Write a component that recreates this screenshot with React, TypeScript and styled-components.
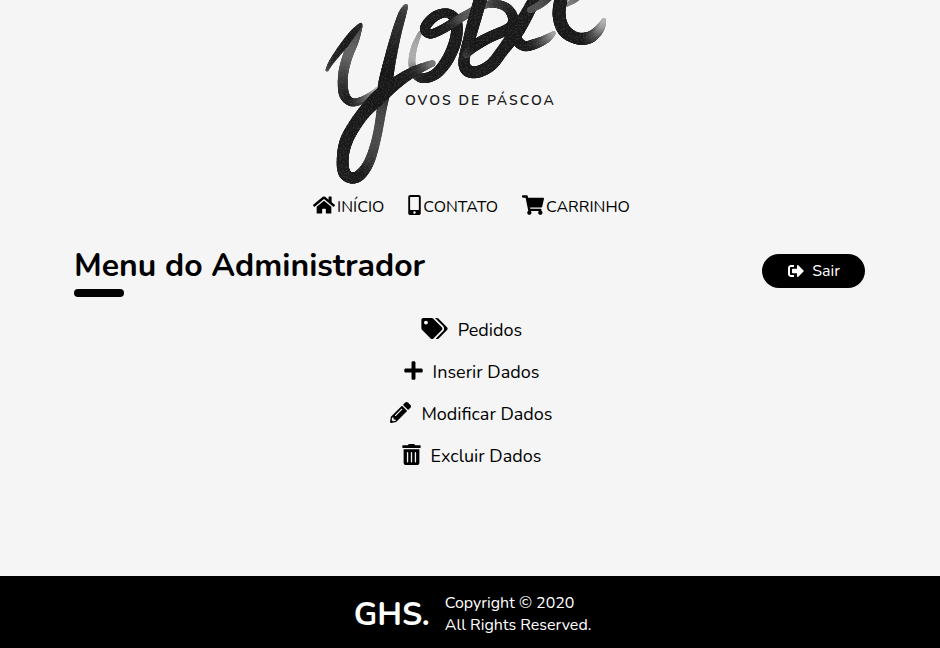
import React from "react";
import styled, { createGlobalStyle } from "styled-components";
import {
  FaHome,
  FaMobileAlt,
  FaPencilAlt,
  FaPlus,
  FaShoppingCart,
  FaSignOutAlt,
  FaTags,
  FaTrashAlt,
} from "react-icons/fa";

const GlobalStyle = createGlobalStyle`
  * { box-sizing: border-box; }
  body {
    margin: 0;
    background: #f5f5f5;
    color: #000;
    font-family: Nunito, Lato, "Noto Sans", sans-serif;
    font-size: 16px;
  }
`;

const Page = styled.div`
  display: flex;
  flex-direction: column;
  min-height: 100vh;
`;

const Header = styled.header`
  display: flex;
  flex-direction: column;
  align-items: center;
`;

const LogoLink = styled.a`
  display: block;
  color: #1a1a1a;
`;

const LogoSvg = styled.svg`
  display: block;
  width: 300px;
  height: 191px;
`;

const LogoCaption = styled.text`
  font-family: Nunito, Lato, sans-serif;
  font-size: 14px;
  font-weight: 600;
  letter-spacing: 2px;
  fill: #1a1a1a;
`;

const Nav = styled.nav`
  display: flex;
  justify-content: center;
  gap: 24px;
  height: 32px;
  padding-left: 3px;
`;

const NavLink = styled.a<{ $iconWidth: number }>`
  display: flex;
  align-items: center;
  gap: 2px;
  color: inherit;
  text-decoration: none;
  line-height: 32px;

  svg {
    flex: none;
    width: ${(p) => p.$iconWidth}px;
    height: 20px;
    margin-bottom: 4px;
  }
`;

const Main = styled.main`
  flex: 1;
  padding: 0 75px 0 74px;
`;

const TitleRow = styled.div`
  display: flex;
  justify-content: space-between;
  align-items: flex-start;
  padding-top: 21px;
`;

const Title = styled.h1`
  margin: 0;
  font-size: 32px;
  font-weight: 700;
  line-height: 44px;

  &::after {
    content: "";
    display: block;
    width: 50px;
    height: 8px;
    margin-top: 1px;
    border-radius: 4px;
    background: #000;
  }
`;

const LogoutButton = styled.button`
  display: flex;
  align-items: center;
  gap: 8px;
  height: 34px;
  margin-top: 10px;
  padding: 0 25px 0 26px;
  border: 0;
  border-radius: 17px;
  background: #000;
  color: #fff;
  font: inherit;
  cursor: pointer;
`;

const MenuList = styled.ul`
  display: flex;
  flex-direction: column;
  align-items: center;
  margin: 0;
  padding: 12px 0 0 4px;
  list-style: none;
`;

const MenuLink = styled.a<{ $iconWidth: number }>`
  display: flex;
  align-items: center;
  gap: 10px;
  height: 42px;
  color: inherit;
  font-size: 18px;
  text-decoration: none;

  svg {
    flex: none;
    width: ${(p) => p.$iconWidth}px;
    height: 21px;
    margin-bottom: 3px;
  }
`;

const Footer = styled.footer`
  display: flex;
  justify-content: center;
  align-items: center;
  gap: 15px;
  height: 72px;
  padding: 4px 0 0 5px;
  background: #000;
  color: #fff;
`;

const Brand = styled.strong`
  font-size: 32px;
  font-weight: 700;
`;

const Copyright = styled.p`
  margin: 0;
  line-height: 22px;
`;

/* x, y, brush width, grey level */
type Point = [number, number, number, number];

const strokes: Point[][] = [
  [
    [420, 33, 4, 150], [414, 48, 6, 170], [412, 64, 7, 165], [417, 76, 8, 60],
    [426, 78, 10, 32], [438, 72, 11, 28], [449, 57, 12, 26], [456, 38, 12, 26],
    [456, 21, 11, 26], [447, 13, 9, 26], [434, 17, 10, 28], [425, 28, 10, 26],
    [430, 34, 9, 26], [441, 30, 9, 26], [453, 23, 9, 40], [464, 16, 8, 80],
    [482, 6, 7, 100], [496, 4, 8, 60], [507, 8, 9, 45], [513, 18, 10, 30],
    [510, 31, 9, 26],
  ],
  [
    [482, -6, 13, 26], [475, 18, 13, 26], [469, 40, 12, 26], [464, 60, 11, 30],
    [467, 70, 12, 26], [477, 72, 12, 26], [491, 65, 12, 28], [503, 50, 12, 26],
    [517, 31, 14, 26], [528, 12, 13, 26], [537, -5, 12, 26],
  ],
  [[466, 55, 6, 60], [476, 45, 11, 26], [490, 37, 11, 26], [508, 29, 11, 26], [519, 20, 11, 26]],
  [
    [530, 10, 6, 80], [541, 4, 7, 80], [551, -5, 8, 60],
  ],
  [
    [516, 24, 12, 26], [516, 38, 11, 26], [524, 46, 10, 26], [535, 44, 10, 35],
    [546, 39, 8, 90], [554, 33, 4, 165],
  ],
  [[565, 6, 3, 130], [574, 0, 6, 120], [581, -6, 6, 90]],
  [
    [562, -6, 13, 26], [559, 14, 13, 26], [564, 30, 13, 26], [576, 38, 12, 26],
    [588, 38, 12, 32], [597, 32, 10, 85], [602, 25, 7, 150], [604, 20, 4, 180],
  ],
  [
    [360, 26, 5, 60], [354, 40, 10, 85], [347, 58, 10, 100], [343, 76, 10, 70],
    [344, 94, 10, 40], [351, 102, 8, 32], [360, 101, 7, 60], [370, 95, 5, 120],
    [377, 88, 2, 180],
  ],
  [[327, 70, 3, 80], [332, 61, 5, 45], [344, 45, 7, 28], [354, 32, 6, 28], [361, 24, 3, 40]],
  [
    [406, 6, 4, 100], [402, 15, 8, 55], [396, 35, 10, 42], [390, 60, 12, 28],
    [385, 85, 14, 24], [382, 107, 10, 60], [377, 136, 9, 75], [370, 160, 10, 60],
    [361, 174, 11, 34], [352, 178, 11, 26], [344, 172, 12, 30], [343, 155, 12, 28],
    [348, 137, 13, 26], [362, 115, 13, 26], [378, 98, 15, 24], [392, 86, 13, 24],
    [406, 76, 11, 28], [419, 69, 9, 45], [433, 63, 6, 120],
  ],
];

const spline = (a: number, b: number, c: number, d: number, t: number) =>
  0.5 *
  (2 * b + (c - a) * t + (2 * a - 5 * b + 4 * c - d) * t * t + (3 * b - a - 3 * c + d) * t * t * t);

const STEPS = 18;

function BrushStroke({ points }: { points: Point[] }) {
  const samples: number[][] = [];
  for (let i = 0; i < points.length - 1; i++) {
    const p = [points[Math.max(0, i - 1)], points[i], points[i + 1], points[Math.min(points.length - 1, i + 2)]];
    for (let s = 0; s < STEPS; s++) {
      samples.push([0, 1, 2, 3].map((k) => spline(p[0][k], p[1][k], p[2][k], p[3][k], s / STEPS)));
    }
  }
  return (
    <g>
      {samples.map(([x, y, w, tone], i) => {
        const level = Math.max(0, Math.round(tone));
        return <circle key={i} cx={x} cy={y} r={w / 2} fill={`rgb(${level},${level},${level})`} />;
      })}
    </g>
  );
}

function Logo() {
  return (
    <LogoSvg viewBox="320 0 300 191" role="img" aria-label="Yobel Ovos de Páscoa">
      <defs>
        <filter id="ink" x="-5%" y="-5%" width="110%" height="110%" colorInterpolationFilters="sRGB">
          <feTurbulence type="fractalNoise" baseFrequency="0.6" numOctaves="2" seed="4" result="noise" />
          <feDisplacementMap
            in="SourceGraphic"
            in2="noise"
            scale="1"
            xChannelSelector="R"
            yChannelSelector="G"
            result="rough"
          />
          <feColorMatrix
            in="noise"
            type="matrix"
            values="0 0 0 0 0.6  0 0 0 0 0.6  0 0 0 0 0.6  0 0 0.7 0 -0.34"
            result="grain"
          />
          <feComposite in="grain" in2="rough" operator="in" result="speckle" />
          <feMerge>
            <feMergeNode in="rough" />
            <feMergeNode in="speckle" />
          </feMerge>
        </filter>
      </defs>
      <g filter="url(#ink)">
        {strokes.map((points, i) => (
          <BrushStroke key={i} points={points} />
        ))}
      </g>
      <LogoCaption x="405" y="105">OVOS DE PÁSCOA</LogoCaption>
    </LogoSvg>
  );
}

const navItems = [
  { label: "INÍCIO", icon: FaHome, width: 22 },
  { label: "CONTATO", icon: FaMobileAlt, width: 13 },
  { label: "CARRINHO", icon: FaShoppingCart, width: 22 },
];

const menuItems = [
  { label: "Pedidos", icon: FaTags, width: 27 },
  { label: "Inserir Dados", icon: FaPlus, width: 19 },
  { label: "Modificar Dados", icon: FaPencilAlt, width: 21 },
  { label: "Excluir Dados", icon: FaTrashAlt, width: 19 },
];

export default function App() {
  return (
    <Page>
      <GlobalStyle />
      <Header>
        <LogoLink href="#">
          <Logo />
        </LogoLink>
        <Nav>
          {navItems.map(({ label, icon: Icon, width }) => (
            <NavLink key={label} href="#" $iconWidth={width}>
              <Icon />
              {label}
            </NavLink>
          ))}
        </Nav>
      </Header>
      <Main>
        <TitleRow>
          <Title>Menu do Administrador</Title>
          <LogoutButton type="button">
            <FaSignOutAlt />
            Sair
          </LogoutButton>
        </TitleRow>
        <MenuList>
          {menuItems.map(({ label, icon: Icon, width }) => (
            <li key={label}>
              <MenuLink href="#" $iconWidth={width}>
                <Icon />
                {label}
              </MenuLink>
            </li>
          ))}
        </MenuList>
      </Main>
      <Footer>
        <Brand>GHS.</Brand>
        <Copyright>
          Copyright © 2020
          <br />
          All Rights Reserved.
        </Copyright>
      </Footer>
    </Page>
  );
}
